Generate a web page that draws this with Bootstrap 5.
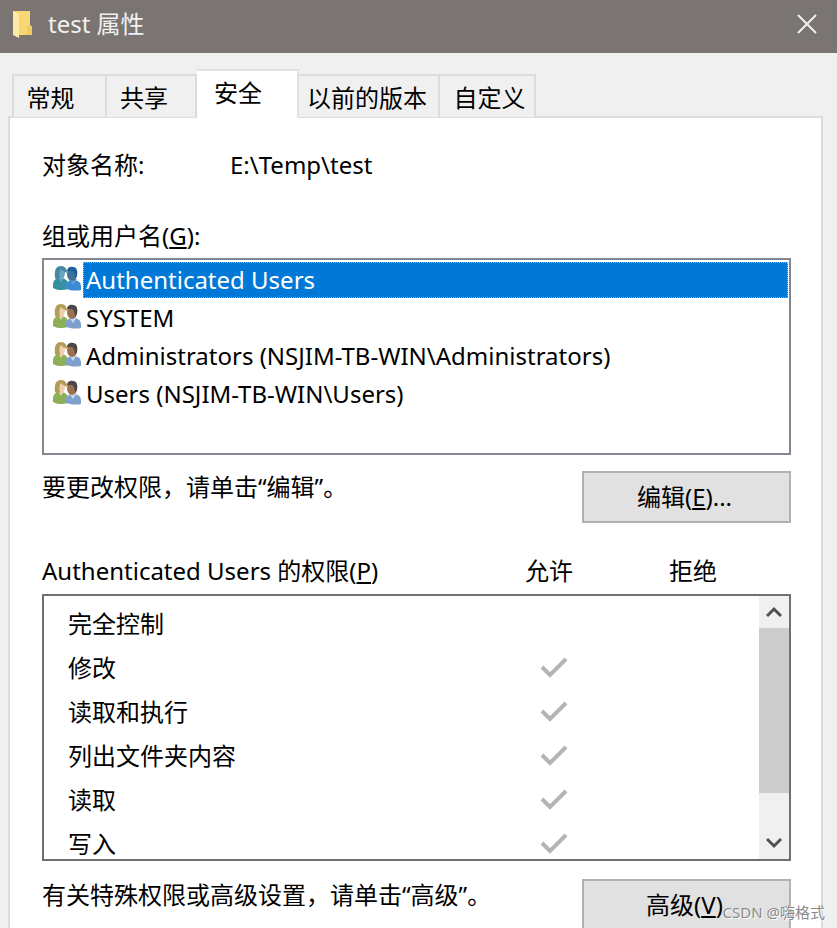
<!DOCTYPE html>
<html lang="zh-CN">
<head>
<meta charset="utf-8">
<meta name="viewport" content="width=device-width, initial-scale=1">
<title>test 属性</title>
<link href="https://cdn.jsdelivr.net/npm/bootstrap@5.3.0/dist/css/bootstrap.min.css" rel="stylesheet">
<style>
  body { font-family: "Noto Sans", "Noto Sans CJK SC", sans-serif; font-size: 24px; line-height: 32px; color: #000; background: #f0f0f0; }
  .title-bar { height: 53px; padding: 0 16px 5px 12px; background: #7a7473; color: #f0f0f0; }
  .close-btn { color: #f0f0f0; line-height: 0; }
  .tabs-row { margin: 16px 0 0 12px; position: relative; z-index: 1; }
  .tabs-row .nav-link { height: 44px; padding: 2px 0 0; border: 2px solid #dcdcdc; border-left-width: 0; border-bottom-width: 1px; border-radius: 0; background: #f0f0f0; color: #000; line-height: 32px; text-align: center; }
  .tabs-row .nav-item:first-child .nav-link { border-left-width: 2px; }
  .tabs-row .nav-link.active { height: 49px; padding: 0 18px 3px 0; border-bottom-color: #fff; background: #fff; color: #000; }
  .tabs-row .tab-general { width: 95px; padding-right: 18px; }
  .tabs-row .tab-share { width: 90px; padding-right: 14px; }
  .tabs-row .tab-secure { width: 102px; }
  .tabs-row .tab-previous { width: 141px; padding-right: 3px; }
  .tabs-row .tab-custom { width: 96px; padding-left: 5px; }
  .sheet { margin: -1px 14px 0 8px; padding: 31px 30px 24px 32px; border: 2px solid #dcdcdc; background: #fff; }
  .name-label { width: 188px; }
  .group-label { margin: 39px 0 6px; }
  .user-list { height: 197px; padding: 2px 1px 0 9px; border: 2px solid #828790; border-radius: 0; }
  .user-item { height: 38px; padding: 0; border: 0; background: none; color: #000; line-height: 34px; --top-a: #8caf57; --skin-a: #ecd0ad; --hair-a: #b39c58; --top-b: #7f9fcd; --shirt: #c8d8ee; --skin-b: #9b7151; --hair-b: #4b4745; }
  .user-item.chosen { --top-a: #3790a0; --skin-a: #69a5c5; --hair-a: #4588a0; --top-b: #3b8bd4; --shirt: #619fd5; --skin-b: #3d7199; --hair-b: #205f99; }
  .user-item .user-name { padding: 0 2px; border: 1px solid transparent; }
  .user-item.chosen .user-name { background: #0078d7; border: 1px dotted #ff9a45; color: #fff; }
  .user-item svg { margin: 4px 2px 0 0; }
  .dialog-btn { width: 209px; height: 52px; padding: 0 4px 0 0; border: 2px solid #b2b2b2; border-radius: 0; background: #e1e1e1; color: #000; font-size: 24px; line-height: 32px; }
  .perm-head { margin: 32px 0 7px; }
  .perm-col { width: 144px; text-align: center; }
  .perm-tail { width: 26px; }
  .perm-box { height: 267px; border: 2px solid #707070; }
  .perm-table { margin: 6px 0 0; color: #000; --bs-table-color: #000; }
  .perm-table th, .perm-table td { height: 44px; padding: 0; border: 0; font-weight: 400; line-height: 32px; vertical-align: middle; }
  .perm-table th { padding-left: 24px; }
  .perm-table td { width: 137px; text-align: center; line-height: 0; }
  .scroll-bar { width: 30px; background: #f0f0f0; }
  .scroll-bar button { height: 32px; line-height: 0; }
  .scroll-thumb { height: 165px; background: #cdcdcd; }
  .more-row { margin-top: 18px; }
  .stamp { right: 12px; bottom: 4px; font-size: 15px; line-height: 24px; color: #8a8a8a; text-shadow: 1px 1px 0 #fff; }
</style>
<script src="https://cdn.jsdelivr.net/npm/bootstrap@5.3.0/dist/js/bootstrap.bundle.min.js"></script>
</head>
<body>
<svg class="d-none" aria-hidden="true">
  <symbol id="people" viewBox="0 0 28 25">
    <path d="M0 19c0-5 3-7 7-7s8 2 8 6v5C9 25 3 24 0 22z" fill="var(--top-a)"/>
    <path d="M5 11l3 5 3-5z" fill="var(--skin-a)"/>
    <ellipse cx="8" cy="7" rx="4" ry="6" fill="var(--skin-a)"/>
    <path d="M2 12C1 4 3 0 8 0c4 0 6 3 6 7-3-1-5-3-6-4-2 2-2 6-1 9-2 2-4 1-5 0z" fill="var(--hair-a)"/>
    <path d="M12 22c0-5 3-8 8-8s8 2 8 7v3c-5 1-11 1-16-2z" fill="var(--top-b)"/>
    <path d="M16 13l4 6 4-6z" fill="var(--shirt)"/>
    <ellipse cx="19" cy="8" rx="5" ry="7" fill="var(--skin-b)"/>
    <path d="M14 5c0-3 3-5 6-4 4 0 5 4 4 9l-2 3c0-4-1-7-3-8z" fill="var(--hair-b)"/>
  </symbol>
  <symbol id="tick" viewBox="0 0 28 22"><path d="M2 10l8 8L26 2" fill="none" stroke="#b4b4b4" stroke-width="4"/></symbol>
</svg>
<div class="vh-100 overflow-hidden position-relative">
  <header class="title-bar d-flex align-items-center">
    <svg class="me-3" width="20" height="28" viewBox="0 0 20 28" aria-hidden="true">
      <path d="M1 1h17v14l2 2v8H7z" fill="#f8d775"/>
      <path d="M1 1l6 3v24l-6-3z" fill="#ffe9a4"/>
      <path d="M15 16h5v9h-5z" fill="#f2cb61"/>
    </svg>
    <span class="flex-grow-1">test 属性</span>
    <button type="button" class="close-btn btn p-1 border-0" aria-label="关闭">
      <svg width="20" height="20" viewBox="0 0 20 20"><path d="M1 1l18 18M19 1L1 19" stroke="currentColor" stroke-width="2"/></svg>
    </button>
  </header>

  <ul class="tabs-row nav nav-tabs border-0 align-items-end flex-nowrap" role="tablist">
    <li class="nav-item"><button type="button" role="tab" class="nav-link tab-general">常规</button></li>
    <li class="nav-item"><button type="button" role="tab" class="nav-link tab-share">共享</button></li>
    <li class="nav-item"><button type="button" role="tab" class="nav-link tab-secure active" aria-selected="true">安全</button></li>
    <li class="nav-item"><button type="button" role="tab" class="nav-link tab-previous">以前的版本</button></li>
    <li class="nav-item"><button type="button" role="tab" class="nav-link tab-custom">自定义</button></li>
  </ul>

  <main class="sheet">
    <div class="d-flex">
      <span class="name-label">对象名称:</span>
      <span>E:\Temp\test</span>
    </div>

    <div class="group-label" id="groups-label">组或用户名(<u>G</u>):</div>
    <div class="user-list list-group" aria-labelledby="groups-label">
      <button type="button" class="user-item chosen list-group-item d-flex align-items-start text-start"><svg width="28" height="25" aria-hidden="true"><use href="#people"/></svg><span class="user-name flex-grow-1">Authenticated Users</span></button>
      <button type="button" class="user-item list-group-item d-flex align-items-start text-start"><svg width="28" height="25" aria-hidden="true"><use href="#people"/></svg><span class="user-name flex-grow-1">SYSTEM</span></button>
      <button type="button" class="user-item list-group-item d-flex align-items-start text-start"><svg width="28" height="25" aria-hidden="true"><use href="#people"/></svg><span class="user-name flex-grow-1">Administrators (NSJIM-TB-WIN\Administrators)</span></button>
      <button type="button" class="user-item list-group-item d-flex align-items-start text-start"><svg width="28" height="25" aria-hidden="true"><use href="#people"/></svg><span class="user-name flex-grow-1">Users (NSJIM-TB-WIN\Users)</span></button>
    </div>

    <div class="d-flex justify-content-between align-items-start mt-3">
      <span>要更改权限，请单击“编辑”。</span>
      <button type="button" class="dialog-btn btn">编辑(<u>E</u>)...</button>
    </div>

    <div class="perm-head d-flex">
      <span class="flex-grow-1">Authenticated Users 的权限(<u>P</u>)</span>
      <span class="perm-col">允许</span>
      <span class="perm-col">拒绝</span>
      <span class="perm-tail"></span>
    </div>
    <div class="perm-box d-flex overflow-hidden">
      <div class="flex-grow-1">
        <table class="perm-table table">
          <tbody>
            <tr><th scope="row">完全控制</th><td></td><td></td></tr>
            <tr><th scope="row">修改</th><td><svg width="28" height="22" role="img" aria-label="允许"><use href="#tick"/></svg></td><td></td></tr>
            <tr><th scope="row">读取和执行</th><td><svg width="28" height="22" role="img" aria-label="允许"><use href="#tick"/></svg></td><td></td></tr>
            <tr><th scope="row">列出文件夹内容</th><td><svg width="28" height="22" role="img" aria-label="允许"><use href="#tick"/></svg></td><td></td></tr>
            <tr><th scope="row">读取</th><td><svg width="28" height="22" role="img" aria-label="允许"><use href="#tick"/></svg></td><td></td></tr>
            <tr><th scope="row">写入</th><td><svg width="28" height="22" role="img" aria-label="允许"><use href="#tick"/></svg></td><td></td></tr>
          </tbody>
        </table>
      </div>
      <div class="scroll-bar d-flex flex-column">
        <button type="button" class="btn p-0 border-0 rounded-0" aria-label="向上滚动"><svg width="16" height="12" viewBox="0 0 16 12"><path d="M1 10l7-7 7 7" fill="none" stroke="#505050" stroke-width="3"/></svg></button>
        <div class="scroll-thumb"></div>
        <button type="button" class="btn p-0 border-0 rounded-0 mt-auto" aria-label="向下滚动"><svg width="16" height="12" viewBox="0 0 16 12"><path d="M1 2l7 7 7-7" fill="none" stroke="#505050" stroke-width="3"/></svg></button>
      </div>
    </div>

    <div class="more-row d-flex justify-content-between align-items-start">
      <span>有关特殊权限或高级设置，请单击“高级”。</span>
      <button type="button" class="dialog-btn btn">高级(<u>V</u>)</button>
    </div>
  </main>
  <div class="stamp position-absolute">CSDN @嗨格式</div>
</div>
</body>
</html>
